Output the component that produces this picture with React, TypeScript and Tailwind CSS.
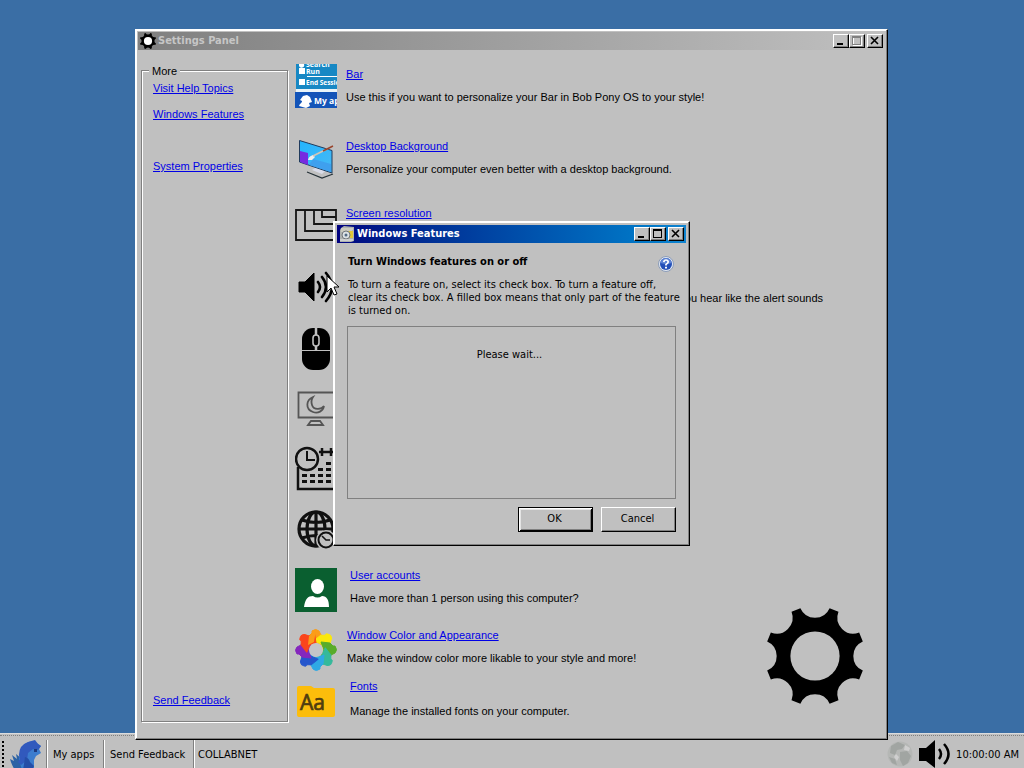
import type { ReactNode } from "react";

const UI = "font-['DejaVu_Sans_Condensed','DejaVu_Sans',sans-serif]";

const FRAME =
  "border border-t-white border-l-white border-r-black border-b-black bg-[#c0c0c0] shadow-[inset_-1px_-1px_0_#808080,inset_1px_1px_0_#fff]";

function gearPath() {
  const point = (degrees: number) => {
    const a = (degrees * Math.PI) / 180;
    return `${(50 * Math.sin(a)).toFixed(2)} ${(-50 * Math.cos(a)).toFixed(2)}`;
  };
  let d = `M${point(17)}`;
  for (let k = 0; k < 8; k++) {
    const base = k * 45;
    d += ` L${point(base + 28)} A16 16 0 0 0 ${point(base + 62)}`;
  }
  return d + "Z";
}

const GEAR = gearPath();

function Gear({ className, hole }: { className: string; hole: string }) {
  return (
    <svg viewBox="-48 -48 96 96" className={className} aria-hidden="true">
      <path d={GEAR} fill="#000" />
      <circle r="24.6" fill={hole} />
    </svg>
  );
}

function TitleButton({ label, disabled, children }: { label: string; disabled?: boolean; children: ReactNode }) {
  return (
    <button
      type="button"
      aria-label={label}
      disabled={disabled}
      className="h-[14px] w-4 border border-t-white border-l-white border-r-black border-b-black bg-[#c0c0c0] shadow-[inset_-1px_-1px_0_#808080]"
    >
      <svg viewBox="0 0 14 12" className="block h-3 w-[14px]" fill="none" stroke={disabled ? "#808080" : "#000"} shapeRendering="crispEdges">
        {children}
      </svg>
    </button>
  );
}

function TitleButtons({ maxDisabled }: { maxDisabled?: boolean }) {
  return (
    <div className="ml-auto flex shrink-0">
      <TitleButton label="Minimize">
        <path d="M3 9h6" strokeWidth="2" />
      </TitleButton>
      <TitleButton label="Maximize" disabled={maxDisabled}>
        {maxDisabled && <path d="M3.5 2.5h8v8h-8z" stroke="#fff" />}
        <path d="M2.5 1.5h8v8h-8z" />
        <path d="M2.5 2.5h8" />
      </TitleButton>
      <div className="ml-[2px] flex">
        <TitleButton label="Close">
          <path d="M3 2l7 7M10 2l-7 7" strokeWidth="1.6" shapeRendering="auto" />
        </TitleButton>
      </div>
    </div>
  );
}

function TextLink({ children }: { children: ReactNode }) {
  return (
    <a href="#" className="text-[#0000e6] underline">
      {children}
    </a>
  );
}

function IconBox({ label, children }: { label: string; children: ReactNode }) {
  return (
    <svg viewBox="0 0 42 48" role="img" aria-label={label} className="h-12 w-[42px] shrink-0">
      {children}
    </svg>
  );
}

const barIcon = (
  <IconBox label="Bar">
    <svg x="0" y="0" width="42" height="45" viewBox="0 0 42 45">
      <path fill="#1788c4" d="M1 0h41v25H1z" />
      <path fill="#e9f4fa" d="M1 25h41v3H1z" />
      <path fill="#1354b8" d="M0 28h42v16H0z" />
      <path fill="#fff" d="M4 0h5a2 2 0 0 1-5 2zM4 4h6v6H4zM4 15h6v6H4zM12 12h30v1H12z" />
      <path fill="#fff" d="M4 42c1-3 3-3 3-5l-2-1 3-4 4-1 3 2 2 5-3 1 1 3-4 2z" />
      <g fill="#fff" fontFamily="Open Sans, sans-serif" fontWeight="bold">
        <text x="11" y="3" fontSize="7">Search</text>
        <text x="11" y="10" fontSize="7">Run</text>
        <text x="11" y="21" fontSize="6.5">End Session</text>
        <text x="19" y="40" fontSize="8.5">My apps</text>
      </g>
    </svg>
  </IconBox>
);

const desktopIcon = (
  <IconBox label="Desktop Background">
    <defs>
      <linearGradient id="screen" x1="0" y1="0" x2="1" y2="1">
        <stop offset="0" stopColor="#22b4ff" />
        <stop offset="1" stopColor="#48b9f4" />
      </linearGradient>
    </defs>
    <path d="M17 34l10 4 5-5-9-3z" fill="#d9dbe8" />
    <path d="M12 36l15 6 11-4" fill="none" stroke="#263238" strokeWidth="1.2" />
    <path d="M4.500 4.500L37 14.500V37L4.500 26z" fill="url(#screen)" stroke="#203a5c" />
    <path d="M5 15l8 2v12l-8-3z" fill="#762be0" />
    <path d="M14 29l4-6 18 5v8z" fill="#3fa0ee" />
    <path d="M13 24c1-4 3-4 5-5l2 2-3 3z" fill="#eee" />
    <path d="M18 20L34 12" stroke="#d3c5b5" strokeWidth="1.800" />
    <path d="M28 15l10-5" stroke="#99452d" strokeWidth="1.600" />
  </IconBox>
);

const resolutionIcon = (
  <IconBox label="Screen resolution">
    <g fill="none" stroke="#161616" strokeWidth="1.800">
      <path d="M1 7h40v30H1z" />
      <path d="M10 7v21h31M19 7v14h22M27 7v7h14" />
    </g>
  </IconBox>
);

const soundIcon = (
  <IconBox label="Sounds">
    <path d="M4 17h6l9-9v28l-9-9H4z" stroke="#000" strokeLinejoin="round" />
    <path d="M23 17q4 5 0 10M27 12q8 10 0 20M31 8q12 14 0 28" fill="none" stroke="#000" strokeWidth="2.600" strokeLinecap="round" />
  </IconBox>
);

const mouseIcon = (
  <IconBox label="Mouse">
    <rect x="7" y="3" width="28" height="42" rx="11" />
    <g fill="none" stroke="#c0c0c0">
      <path d="M7 25.500h28" />
      <path d="M21 3v22" strokeWidth="2.500" />
      <rect x="18" y="10" width="6" height="11" rx="3" fill="#000" strokeWidth="1.600" />
    </g>
  </IconBox>
);

const displayIcon = (
  <IconBox label="Display">
    <g fill="none" stroke="#555" strokeWidth="1.800">
      <path d="M3.500 2.500h36v25h-36z" />
      <path d="M18 7c-7 3-8 12 0 15 5 2 10-1 11-6-2 3-10 5-12-1-1-3-1-5 1-8z" />
      <path d="M16 31h9l3 4H13z" />
    </g>
  </IconBox>
);

const dateIcon = (
  <IconBox label="Date and time">
    <g fill="none" stroke="#111" strokeWidth="2.500">
      <path d="M3 22v22h38M24 7h17" />
      <path d="M27 3v8M36 3v8" />
      <circle cx="12" cy="14" r="11" />
      <path d="M12 6v9h8" strokeWidth="2" />
    </g>
    <path d="M7 29h5v3H7zM15 29h5v3h-5zM23 29h5v3h-5zM31 29h5v3h-5zM7 35h5v3H7zM15 35h5v3h-5zM23 35h5v3h-5zM31 35h5v3h-5zM23 23h5v3h-5zM31 23h5v3h-5zM31 17h5v3h-5z" fill="#111" />
  </IconBox>
);

const regionIcon = (
  <IconBox label="Region">
    <g fill="none" stroke="#111" strokeWidth="3.200">
      <circle cx="21" cy="21" r="17" />
      <ellipse cx="21" cy="21" rx="9" ry="17" />
      <path d="M21 4v34M4 21h34M7 12q14 5 28 0M7 30q14-5 28 0" />
    </g>
    <circle cx="31" cy="32" r="10" fill="#c0c0c0" />
    <circle cx="31" cy="32" r="7.500" fill="#c0c0c0" stroke="#111" strokeWidth="2" />
    <path d="M27 28l4 4h4" fill="none" stroke="#111" strokeWidth="1.600" />
  </IconBox>
);

const userIcon = (
  <IconBox label="User accounts">
    <path d="M0 3h42v44H0z" fill="#0a5f30" />
    <ellipse cx="22.500" cy="21.500" rx="6.500" ry="7.500" fill="#fff" />
    <path d="M9 42c1-8 4-11 9-11q4.500 3 9 0c5 0 7 4 7 11z" fill="#fff" />
  </IconBox>
);

const petals = ["#fb9d18", "#fae80c", "#58ac2b", "#35b99b", "#2fa9e4", "#2556cc", "#8527bd", "#fb451c"];

const colorIcon = (
  <IconBox label="Window Color and Appearance">
    <g transform="translate(21 25)">
      {petals.map((color, i) => (
        <path
          key={color}
          d="M-8-5L-7-14L-4-17L-4-19Q0-22 3-19L5-15L10-12L5-5L0-8z"
          fill={color}
          stroke={color}
          strokeLinejoin="round"
          transform={`rotate(${i * 45})`}
        />
      ))}
      <path d="M-8-5L-7-14L-4-17L-4-19Q-2-21 0-20L-2-8z" fill="#fb9d18" />
      <circle r="7" fill="#c4c4c8" />
    </g>
  </IconBox>
);

const fontsIcon = (
  <IconBox label="Fonts">
    <path d="M2 12q0-2 2-2h12l3 2h19q2 0 2 2v25q0 2-2 2H4q-2 0-2-2z" fill="#fcbd0b" />
    <text x="5" y="34" fontSize="21" fill="#4f3d11" stroke="#4f3d11" strokeWidth="0.700" fontFamily="Open Sans, sans-serif">
      Aa
    </text>
  </IconBox>
);

type Row = { icon: ReactNode; height: string; inset?: string; title?: string; text?: string; textClass?: string };

const rows: Row[] = [
  { icon: barIcon, height: "h-[72px]", title: "Bar", text: "Use this if you want to personalize your Bar in Bob Pony OS to your style!" },
  { icon: desktopIcon, height: "h-[67px]", title: "Desktop Background", text: "Personalize your computer even better with a desktop background." },
  { icon: resolutionIcon, height: "h-[62px]", title: "Screen resolution" },
  { icon: soundIcon, height: "h-[60px]", title: "Sounds", text: "Change what you hear like the alert sounds", textClass: "w-[477px] text-right" },
  { icon: mouseIcon, height: "h-[65px]" },
  { icon: displayIcon, height: "h-[55px]" },
  { icon: dateIcon, height: "h-[63px]" },
  { icon: regionIcon, height: "h-[57px]" },
  { icon: userIcon, height: "h-[60px]", inset: "pl-1", title: "User accounts", text: "Have more than 1 person using this computer?" },
  { icon: colorIcon, height: "h-[51px]", inset: "pl-px", title: "Window Color and Appearance", text: "Make the window color more likable to your style and more!" },
  { icon: fontsIcon, height: "h-[46px]", inset: "pl-1", title: "Fonts", text: "Manage the installed fonts on your computer.", textClass: "pt-[2px]" },
];

function SettingsWindow() {
  return (
    <section
      aria-label="Settings Panel"
      className={`${FRAME} absolute top-[29px] left-[135px] w-[753px] p-[2px] font-['Liberation_Sans',sans-serif] text-[11px]`}
    >
      <header className={`${UI} flex h-[18px] items-center gap-[2px] bg-linear-to-r from-[#808080] to-[#c0c0c0] px-[2px] font-bold text-[#c6c6c6]`}>
        <Gear className="size-4" hole="#fff" />
        <h1>Settings Panel</h1>
        <TitleButtons maxDisabled />
      </header>
      <div className="flex pt-[14px] pr-[22px] pb-[15px] pl-[3px]">
        <fieldset className="-mt-[2px] flex w-[147px] shrink-0 flex-col border border-[#808080] pb-[11px] pl-[11px] shadow-[1px_1px_0_#fff,inset_1px_1px_0_#fff]">
          <legend className="-ml-1 bg-[#c0c0c0] px-[3px] pt-[2px] leading-[14px]">More</legend>
          <nav className="flex flex-1 flex-col leading-[26px]">
            <div className="-mt-[3px]"><TextLink>Visit Help Topics</TextLink></div>
            <div><TextLink>Windows Features</TextLink></div>
            <div className="mt-[26px]"><TextLink>System Properties</TextLink></div>
            <div className="mt-auto leading-5"><TextLink>Send Feedback</TextLink></div>
          </nav>
        </fieldset>
        <ul className="ml-[7px] min-w-0 flex-1 whitespace-nowrap">
          {rows.map((row, i) => (
            <li key={i} className={`${row.height} flex items-start gap-[9px]`}>
              {row.icon}
              <div className={row.inset}>
                {row.title && <h2 className="leading-5"><TextLink>{row.title}</TextLink></h2>}
                {row.text && <p className={`${row.textClass ?? ""} mt-[3px] leading-5`}>{row.text}</p>}
              </div>
            </li>
          ))}
        </ul>
        <div className="self-end pb-[18px]">
          <Gear className="size-24" hole="#c0c0c0" />
        </div>
      </div>
    </section>
  );
}

function FeaturesDialog() {
  return (
    <section
      role="dialog"
      aria-label="Windows Features"
      className={`${UI} ${FRAME} absolute top-[221px] left-[333px] w-[357px] p-[3px] text-[11px]`}
    >
      <header className="flex h-[18px] items-center gap-[2px] bg-linear-to-r from-[#000080] to-[#1084d0] px-[2px] font-bold text-white">
        <svg viewBox="0 0 16 16" className="size-4" aria-hidden="true">
          <path d="M2 2l3-2 10 1v14l-3 1H1V4z" fill="#aeb2b0" />
          <path d="M2 3h12M2 5h11" stroke="#e8e4cf" />
          <path d="M9 5h5v7H9z" fill="#dfc739" />
          <circle cx="7" cy="9" r="4" fill="#dce2e5" stroke="#73777c" />
          <circle cx="7" cy="9" r="1.500" fill="#536b84" />
          <path d="M1 14h13" stroke="#eee" />
        </svg>
        <h2>Windows Features</h2>
        <TitleButtons />
      </header>
      <div className="pt-3 pr-[10px] pb-[10px] pl-[10px]">
        <div className="flex justify-between pr-[2px] pl-px">
          <h3 className="leading-[14px] font-bold">Turn Windows features on or off</h3>
          <svg viewBox="0 0 16 16" className="mt-px size-4" role="img" aria-label="Help">
            <circle cx="8" cy="8" r="7.500" fill="#e2e8f2" stroke="#8c9cb8" />
            <circle cx="8" cy="8" r="6" fill="#2450b8" />
            <path d="M2.500 7a5.500 5 0 0 1 11 0q-5 2-11 0z" fill="#5d83d4" />
            <path d="M5.800 6.200Q6 4 8 4t2.200 2Q10.200 7 8 8.400V9.500" fill="none" stroke="#fff" strokeWidth="1.700" />
            <path d="M7 10.800h2v1.800H7z" fill="#fff" />
          </svg>
        </div>
        <p className="mt-[6px] pl-px leading-[13px] whitespace-nowrap">
          To turn a feature on, select its check box. To turn a feature off,
          <br />
          clear its check box. A filled box means that only part of the feature
          <br />
          is turned on.
        </p>
        <div className="mt-[9px] h-[173px] border border-[#808080] pt-[21px] pr-1 text-center leading-[14px]">Please wait...</div>
        <div className="mt-2 flex justify-end gap-2">
          <button type="button" className="h-[25px] w-[75px] border border-black bg-[#c0c0c0] pr-[2px] shadow-[inset_1px_1px_0_#fff,inset_-1px_-1px_0_#000,inset_2px_2px_0_#e4e4e4,inset_-2px_-2px_0_#808080]">
            OK
          </button>
          <button type="button" className="h-[25px] w-[75px] border border-t-white border-l-white border-r-black border-b-black bg-[#c0c0c0] pr-[2px] shadow-[inset_-1px_-1px_0_#808080]">
            Cancel
          </button>
        </div>
      </div>
    </section>
  );
}

function Taskbar() {
  const item = "h-full border-l border-[#808080] pt-[2px] text-left whitespace-nowrap shadow-[inset_1px_0_0_#fff]";
  return (
    <footer className={`${UI} flex h-[35px] items-stretch border-t border-[#dcdcdc] bg-[#c0c0c0] pt-px text-[11px]`}>
      <div className="flex flex-1 items-stretch border-t border-dotted border-[#808080] pt-1">
        <div className="my-px ml-[2px] w-[3px] border-l-2 border-dotted border-black" />
        <button type="button" aria-label="Start" className="w-[41px] pl-1">
          <svg viewBox="0 0 34 30" className="block h-[30px] w-[34px] overflow-hidden">
            <path d="M6 30q-3-4-5-11l4 2-2-6 5 4-1-5 6 5 6 11z" fill="#2b62a5" />
            <path d="M11 11Q15 1 25 1l7 5-2 3 2 4-5 3-2 4v10H13l-3-10z" fill="#3b7cce" />
            <path d="M10 15Q10 5 19 2l7-2 3 4 3 2-3 4-5-1-5 4-1 7-6 5-3-3 2-3z" fill="#3159bd" />
            <path d="M16 17q4 1 5 5l4 4-2 4h-9l1-6z" fill="#254ea7" />
            <path d="M25 9h3v3h-3z" fill="#1d397e" />
          </svg>
        </button>
        <button type="button" className={`${item} w-[57px] pl-[6px]`}>My apps</button>
        <button type="button" className={`${item} w-[90px] pl-[6px]`}>Send Feedback</button>
        <button type="button" className={`${item} pl-1`}>COLLABNET</button>
        <div className="ml-auto flex items-center gap-1 pr-[5px]">
          <svg viewBox="0 0 28 28" className="size-7" role="img" aria-label="Network">
            <circle cx="14" cy="14" r="12.500" fill="#b5b7b5" />
            <path d="M5 6l7-4 7 3-3 4-5 1-2 5-5-2zM14 12l7-1 4 5-3 7-5 3-3-6zM3 17l6 2 2 6-5-2z" fill="#a1a5a2" />
            <path d="M19 5l5 3-1 3-5-1zM10 14l3 3-2 4-3-4z" fill="#cfcfcf" />
          </svg>
          <svg viewBox="0 0 34 28" className="h-7 w-[34px]" role="img" aria-label="Volume">
            <path d="M1 8h7l9-8v28l-9-7H1z" />
            <path d="M21 9q4 5 0 10M26 4q9 10 0 20" fill="none" stroke="#000" strokeWidth="2.500" />
          </svg>
          <time className="pt-[2px] whitespace-nowrap">10:00:00 AM</time>
        </div>
      </div>
    </footer>
  );
}

export default function App() {
  return (
    <div className="relative flex min-h-screen flex-col overflow-hidden bg-[#3a6ea5] text-black">
      <main className="flex-1">
        <SettingsWindow />
        <FeaturesDialog />
        <svg viewBox="0 0 13 22" className="absolute top-[275px] left-[326px] h-[22px] w-[13px]" aria-hidden="true">
          <path d="M1 1v16l4-4 3 7 3-1-3-7h5z" fill="#fff" stroke="#000" />
        </svg>
      </main>
      <Taskbar />
    </div>
  );
}
